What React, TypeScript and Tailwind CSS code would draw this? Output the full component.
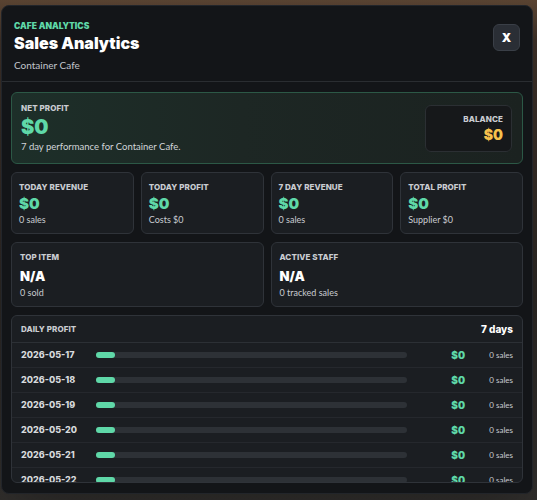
import React from 'react';

const days = ['2026-05-17', '2026-05-18', '2026-05-19', '2026-05-20', '2026-05-21', '2026-05-22'];

const stats = [
  { label: 'Today Revenue', sub: '0 sales' },
  { label: 'Today Profit', sub: 'Costs $0' },
  { label: '7 Day Revenue', sub: '0 sales' },
  { label: 'Total Profit', sub: 'Supplier $0' },
];

const heavy = "font-['Inter','Liberation_Sans',sans-serif]";
const body = "font-['Lato','Noto_Sans',sans-serif]";

function Label({ children }: { children: React.ReactNode }) {
  return <div className={`${heavy} text-[8px] font-extrabold uppercase leading-[10px] tracking-[0.01em] text-[#c9ccd1]`}>{children}</div>;
}

export default function App() {
  return (
    <div className="h-[500px] w-[537px] overflow-hidden bg-[linear-gradient(180deg,#5a4432_0%,#3b2f27_8%,#2a2623_60%,#302e2c_100%)] pt-[5px] pl-[1px]">
      <div className="flex h-[489px] w-[532px] flex-col overflow-hidden rounded-lg border border-[#22252a] bg-[#131518] shadow-2xl">
        {/* header */}
        <div className="flex items-start justify-between border-b border-[#2a2d31] px-[12px] pt-[14px] pb-[9px]">
          <div>
            <div className={`${heavy} text-[8.5px] font-black uppercase leading-[12px] text-[#5fd8a8]`}>Cafe Analytics</div>
            <div className={`${heavy} mt-[1px] text-[16px] font-black leading-[21px] text-white`}>Sales Analytics</div>
            <div className={`${body} mt-[4px] text-[10px] leading-[14px] text-[#c2c6cc]`}>Container Cafe</div>
          </div>
          <button className={`${heavy} mt-[4px] flex h-[27px] w-[27px] items-center justify-center rounded-md border border-[#3a3f47] bg-[#2a2e35] text-[12px] font-black text-white`}>
            X
          </button>
        </div>

        {/* body */}
        <div className="flex min-h-0 flex-1 flex-col gap-2 px-[9px] pt-[10px] pb-[10px]">
          <div className="flex h-[72px] items-center justify-between rounded-md border border-[#2c5846] bg-[linear-gradient(90deg,#1d2f29_0%,#1d2724_45%,#1b2220_100%)] pl-[9px] pr-[10px]">
            <div>
              <Label>Net Profit</Label>
              <div className={`${heavy} mt-[1px] text-[20px] font-black leading-[26px] text-[#5fd8a8]`}>$0</div>
              <div className={`${body} text-[9.5px] leading-[13px] text-[#d2d5d9]`}>7 day performance for Container Cafe.</div>
            </div>
            <div className="flex h-[47px] w-[87px] flex-col items-end justify-center rounded-md border border-[#2b2f33] bg-[#16181a] pr-[8px]">
              <Label>Balance</Label>
              <div className={`${heavy} mt-[2px] text-[14px] font-black leading-[17px] text-[#f6c14c]`}>$0</div>
            </div>
          </div>

          <div className="grid grid-cols-4 gap-[7px]">
            {stats.map((s) => (
              <div key={s.label} className="h-[62px] rounded-md border border-[#2f3339] bg-[#1b1e22] px-[7px] pt-[9px]">
                <Label>{s.label}</Label>
                <div className={`${heavy} mt-[2px] text-[15px] font-black leading-[19px] text-[#5fd8a8]`}>$0</div>
                <div className={`${body} mt-[1px] text-[9px] leading-[12px] text-[#c9ccd1]`}>{s.sub}</div>
              </div>
            ))}
          </div>

          <div className="grid grid-cols-2 gap-[7px]">
            {[
              { label: 'Top Item', sub: '0 sold' },
              { label: 'Active Staff', sub: '0 tracked sales' },
            ].map((s) => (
              <div key={s.label} className="h-[65px] rounded-md border border-[#2f3339] bg-[#1b1e22] px-[8px] pt-[9px]">
                <Label>{s.label}</Label>
                <div className={`${heavy} mt-[6px] text-[13px] font-black leading-[16px] text-white`}>N/A</div>
                <div className={`${body} mt-[3px] text-[9px] leading-[12px] text-[#c9ccd1]`}>{s.sub}</div>
              </div>
            ))}
          </div>

          <div className="min-h-0 flex-1 overflow-hidden rounded-md border border-[#2f3339] bg-[#1b1e22]">
            <div className="flex h-[27px] items-center justify-between border-b border-[#2c3035] px-[9px]">
              <Label>Daily Profit</Label>
              <div className={`${heavy} text-[10px] font-extrabold text-white`}>7 days</div>
            </div>
            {days.map((d) => (
              <div key={d} className="flex h-[25px] items-center border-b border-[#25282d] px-[9px]">
                <div className={`${heavy} w-[75px] text-[9px] font-extrabold text-[#d7dadd]`}>{d}</div>
                <div className="h-[6px] w-[311px] rounded-full bg-[#2d3136]">
                  <div className="h-[6px] w-[19px] rounded-full bg-[#5fd8a8]" />
                </div>
                <div className={`${heavy} ml-auto w-[38px] text-[10px] font-black text-[#5fd8a8]`}>$0</div>
                <div className={`${body} whitespace-nowrap text-right text-[8px] text-[#c9ccd1]`}>0 sales</div>
              </div>
            ))}
          </div>
        </div>
      </div>
    </div>
  );
}
